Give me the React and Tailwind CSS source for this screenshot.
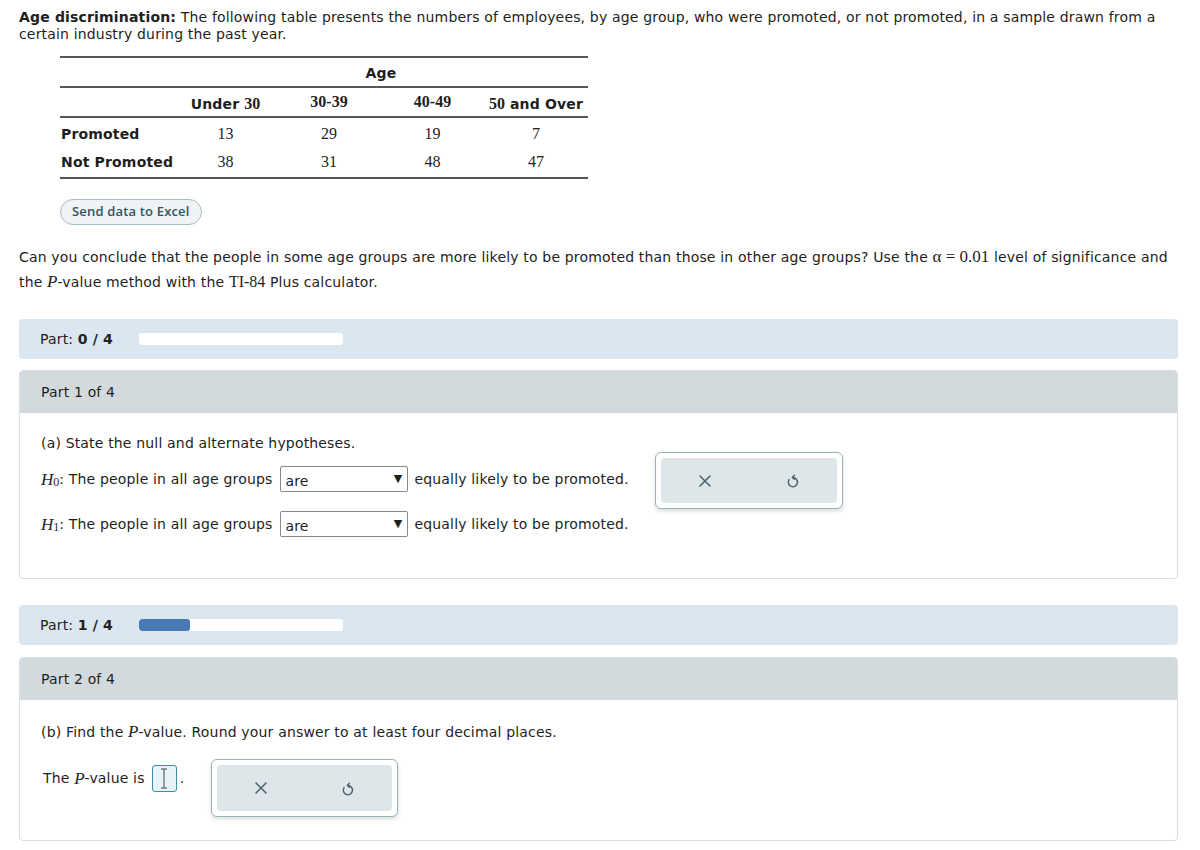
import React from "react";

const V = { fontFamily: '"DejaVu Sans", Verdana, sans-serif', letterSpacing: "0.17px" };
const M = { fontFamily: '"Liberation Serif", "Times New Roman", serif', letterSpacing: "0" };

function MI({ children, sub }) {
  return (
    <span style={M} className="italic text-[17px] leading-none">
      {children}
      {sub !== undefined && <sub className="not-italic text-[12px] relative top-[1px]">{sub}</sub>}
    </span>
  );
}

function XIcon() {
  return (
    <svg width="14" height="14" viewBox="0 0 14 14" fill="none" stroke="#4d6570" strokeWidth="1.6" strokeLinecap="round">
      <path d="M2 2 L12 12 M12 2 L2 12" />
    </svg>
  );
}

function UndoIcon() {
  return (
    <svg width="14" height="17" viewBox="0 0 14 17" fill="none" stroke="#4d6570" strokeWidth="1.5" strokeLinecap="round" strokeLinejoin="round">
      <path d="M6.6 5.5 A4.6 4.6 0 1 1 3 7.6" />
      <path d="M8.4 3.2 L6.4 5.5 L8.6 7.3" />
    </svg>
  );
}

function ActionBox({ className }) {
  return (
    <div className={"border border-[#9fb1b9] rounded-[6px] p-[5px] bg-white shadow-[0_2px_4px_rgba(0,0,0,0.15)] " + className}>
      <div className="h-full bg-[#dfe6e9] rounded-[4px] flex items-center">
        <div className="flex-1 flex justify-center"><XIcon /></div>
        <div className="flex-1 flex justify-center"><UndoIcon /></div>
      </div>
    </div>
  );
}

function PartBar({ n, fill }) {
  return (
    <div className="h-[40px] bg-[#dae6f0] rounded-[4px] flex items-center pl-[21px]">
      <span className="text-[14px] text-[#222] w-[99px]">Part: <b>{n} / 4</b></span>
      <div className="w-[204px] h-[12px] bg-white rounded-[3px] overflow-hidden">
        <div className="h-full bg-[#4a7ab5] rounded-[3px]" style={{ width: fill }} />
      </div>
    </div>
  );
}

function Select() {
  return (
    <span className="inline-flex items-center justify-between w-[128px] h-[26px] border border-[#8a8a8a] rounded-[2px] bg-white pl-[4px] pr-[5px] ml-[8px] mr-[6px] align-middle">
      <span className="text-[14px] relative top-[2px]">are</span>
      <span className="text-[11px]">▼</span>
    </span>
  );
}

export default function App() {
  const th = "font-bold text-[14px]";
  return (
    <div style={V} className="w-[1200px] h-[850px] bg-white text-[#1e1e1e] text-[14px] relative overflow-hidden">
      <div className="px-[19px] pt-[9px] leading-[17px]">
        <b>Age discrimination:</b> The following table presents the numbers of employees, by age group, who were promoted, or not promoted, in a sample drawn from a certain industry during the past year.
      </div>

      <table className="ml-[60px] mt-[13px] border-collapse w-[528px]">
        <tbody>
          <tr className="border-t-2 border-[#555] border-b-2">
            <td className="h-[30px] w-[114px]"></td>
            <td colSpan={4} className={th + " text-center h-[30px] pt-[2px]"}>Age</td>
          </tr>
          <tr className="border-b-2 border-[#555]">
            <td className="h-[30px] w-[114px]"></td>
            <td className={th + " text-center w-[103px] pt-[3px]"}>Under <span style={M} className="text-[16px]">30</span></td>
            <td className="text-center w-[104px]"><span style={M} className="font-bold text-[16px]">30-39</span></td>
            <td className="text-center w-[103px]"><span style={M} className="font-bold text-[16px]">40-49</span></td>
            <td className={th + " text-center w-[104px] pt-[3px]"}><span style={M} className="text-[16px]">50</span> and Over</td>
          </tr>
          <tr>
            <td className="font-bold h-[30px] pl-[1px] text-[14px] pt-[3px]">Promoted</td>
            {[13, 29, 19, 7].map((v, i) => (
              <td key={i} style={M} className="text-center text-[16px] pt-[3px]">{v}</td>
            ))}
          </tr>
          <tr className="border-b-2 border-[#555]">
            <td className="font-bold h-[31px] pl-[1px] text-[14px] whitespace-nowrap">Not Promoted</td>
            {[38, 31, 48, 47].map((v, i) => (
              <td key={i} style={M} className="text-center text-[16px]">{v}</td>
            ))}
          </tr>
        </tbody>
      </table>

      <div className="ml-[60px] mt-[20px]">
        <span style={{ fontFamily: '"Open Sans", Lato, sans-serif' }} className="inline-flex items-center h-[26px] px-[11px] rounded-full border border-[#a9bcc4] bg-[#eff3f5] text-[13px] font-semibold text-[#2f5563]">
          Send data to Excel
        </span>
      </div>

      <div className="px-[19px] mt-[20px] leading-[25px]">
        Can you conclude that the people in some age groups are more likely to be promoted than those in other age groups? Use the <span style={M} className="text-[17px] leading-none">α = 0.01</span> level of significance and the <MI>P</MI>-value method with the <span style={M} className="text-[16px] leading-none">TI-84</span> Plus calculator.
      </div>

      <div className="mx-[19px] mt-[24px] w-[1159px]">
        <PartBar n={0} fill="0px" />

        <div className="mt-[11px] border border-[#d8dfe2] rounded-[4px] overflow-hidden h-[209px]">
          <div className="h-[42px] bg-[#d3dadd] flex items-center pl-[21px] pt-[1px]">Part 1 of 4</div>
          <div className="pl-[21px] pt-[20px] relative">
            <div>(a) State the null and alternate hypotheses.</div>
            <div className="mt-[12px] flex items-center whitespace-pre">
              <MI sub="0">H</MI>{": The people in all age groups"}
              <Select />equally likely to be promoted.
            </div>
            <div className="mt-[19px] flex items-center whitespace-pre">
              <MI sub="1">H</MI>{": The people in all age groups"}
              <Select />equally likely to be promoted.
            </div>
            <ActionBox className="absolute left-[635px] top-[39px] w-[188px] h-[57px]" />
          </div>
        </div>

        <div className="mt-[26px]">
          <PartBar n={1} fill="51px" />
        </div>

        <div className="mt-[12px] border border-[#d8dfe2] rounded-[4px] overflow-hidden h-[184px]">
          <div className="h-[42px] bg-[#d3dadd] flex items-center pl-[21px]">Part 2 of 4</div>
          <div className="pl-[21px] pt-[22px] relative">
            <div>(b) Find the <MI>P</MI>-value. Round your answer to at least four decimal places.</div>
            <div className="mt-[22px] flex items-center pl-[2px] whitespace-pre">
              {"The "}<MI>P</MI>{"-value is"}
              <span className="ml-[7px] w-[25px] h-[27px] border border-[#3a8fa6] rounded-[3px] bg-[#e6f3f8] flex items-center justify-center">
                <svg width="8" height="21" viewBox="0 0 8 21" stroke="#444" strokeWidth="1" fill="none">
                  <path d="M1 1 H7 M4 1 V20 M1 20 H7" />
                </svg>
              </span>
              <span className="ml-[3px]">.</span>
            </div>
            <ActionBox className="absolute left-[191px] top-[59px] w-[187px] h-[58px]" />
          </div>
        </div>
      </div>
    </div>
  );
}
